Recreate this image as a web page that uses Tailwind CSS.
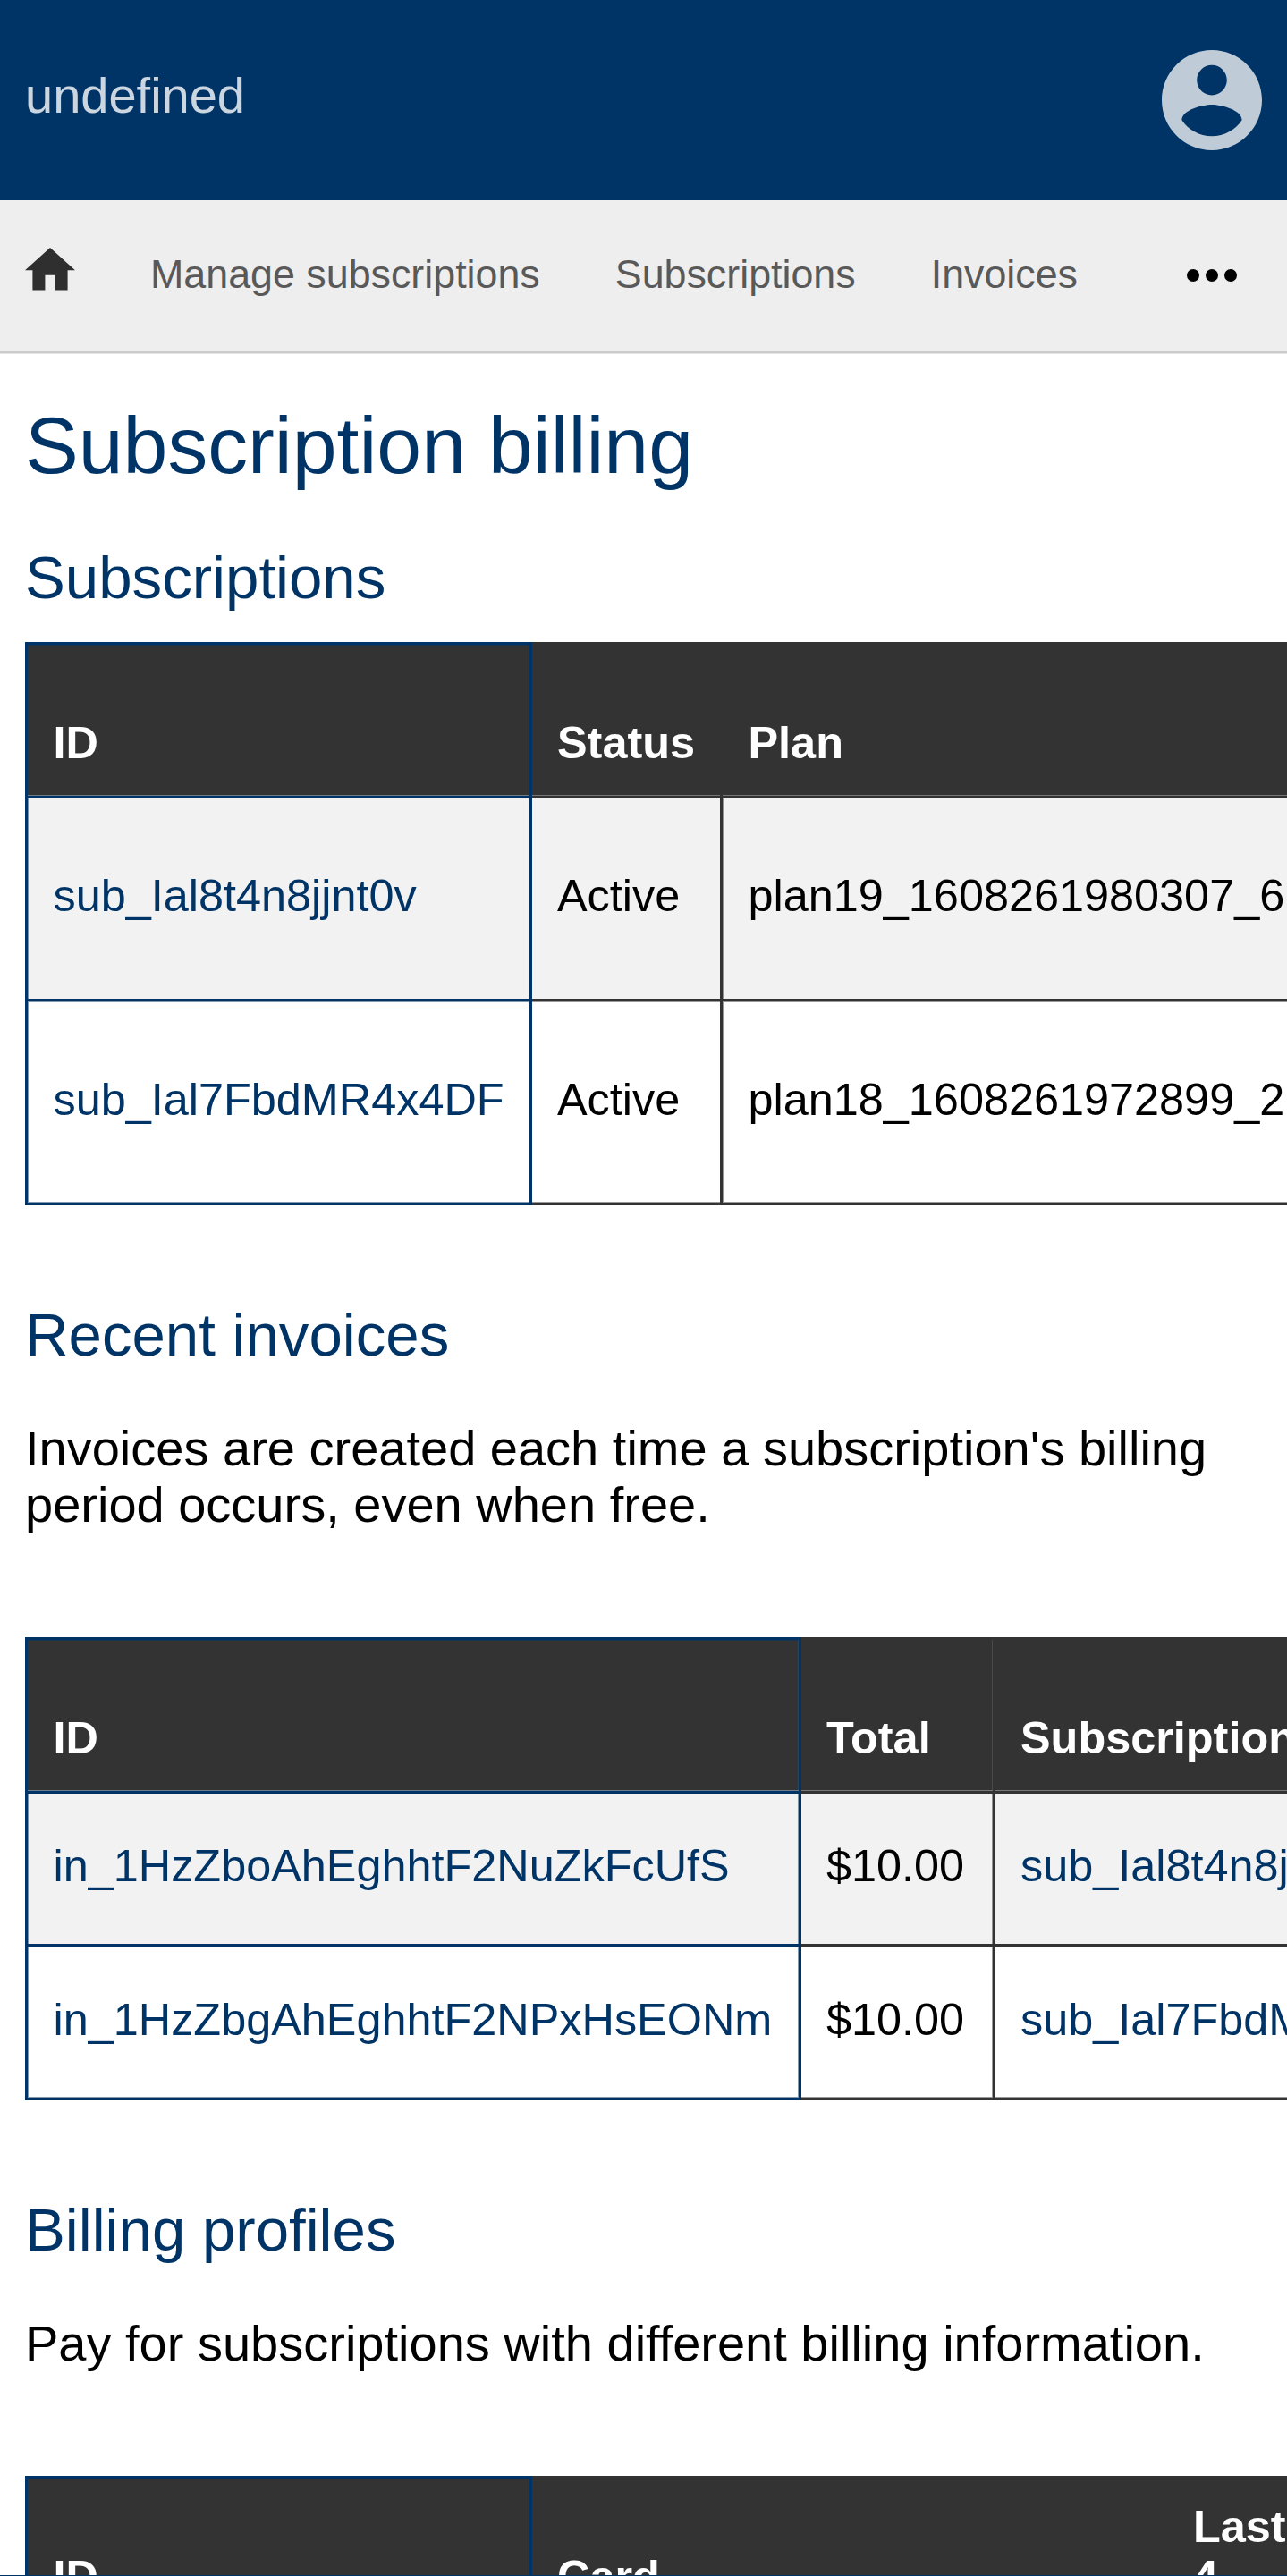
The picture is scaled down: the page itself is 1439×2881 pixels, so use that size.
<!DOCTYPE html>
<html lang="en">
<head>
<meta charset="utf-8">
<title>Subscription billing</title>
<script src="https://cdn.jsdelivr.net/npm/@tailwindcss/browser@4"></script>
</head>
<body class="bg-white overflow-hidden">
<div class="w-[1439px] h-[2881px] overflow-hidden flex flex-col text-black font-['Liberation_Sans',Arial,sans-serif]">
  <header class="h-[224px] shrink-0 bg-[#003466] flex items-center justify-between pl-7 pr-7">
    <a class="text-[56px] leading-[64px] -mt-[11px] text-white/80">undefined</a>
    <svg class="size-[112px]" viewBox="2 2 20 20" fill="#fff" fill-opacity=".75"><path d="M12 2C6.48 2 2 6.48 2 12s4.480 10 10 10 10-4.480 10-10S17.520 2 12 2zm0 3c1.660 0 3 1.340 3 3s-1.340 3-3 3-3-1.340-3-3 1.340-3 3-3zm0 14.200c-2.500 0-4.710-1.280-6-3.220.030-1.990 4-3.080 6-3.080 1.990 0 5.970 1.090 6 3.080-1.290 1.940-3.500 3.220-6 3.220z"/></svg>
  </header>
  <nav class="h-[172px] shrink-0 bg-[#eee] border-b border-[#e3e3e3]">
    <div class="h-[171px] border-b-3 border-[#ccc] flex items-center pl-7 pr-14 text-[44.8px] leading-[52px] text-[#595959]">
      <svg class="w-14 h-[47.6px] -mt-[14px] shrink-0" viewBox="2 3 20 17" fill="#2f2f2f"><path d="M10 20v-6h4v6h5v-8h3L12 3 2 12h3v8z"/></svg>
      <div class="flex gap-[84px] ml-[84px] -mt-[5px] whitespace-nowrap">
        <a>Manage subscriptions</a>
        <a>Subscriptions</a>
        <a>Invoices</a>
      </div>
      <svg class="w-14 h-[14px] ml-auto" viewBox="0 0 16 4" fill="#000"><circle cx="2" cy="2" r="2"/><circle cx="8" cy="2" r="2"/><circle cx="14" cy="2" r="2"/></svg>
    </div>
  </nav>
  <main class="h-[2484px] shrink-0 overflow-hidden pl-7">
    <h1 class="mt-[52px] text-[89.6px] leading-[100px] text-[#003466]">Subscription billing</h1>
    <h2 class="mt-[59px] text-[67.2px] leading-[78px] text-[#003466]">Subscriptions</h2>

    <section class="mt-[33px] text-[50.4px] leading-[56px] whitespace-nowrap">
      <div class="grid grid-cols-[567px_210px_634px] h-[172px] bg-[#333] text-white font-bold">
        <div class="border-3 border-b-0 border-[#003466] shadow-[inset_0_-1px_0_#6f7d8b,inset_-1px_0_0_#274560,inset_0_1px_0_#1a3450] flex items-end pl-[28.5px] pb-[31.5px]">ID</div>
        <div class="shadow-[inset_0_-1px_0_#777] flex items-end pl-[28px] pb-[31.5px]">Status</div>
        <div class="border-l-3 border-[#333] shadow-[inset_0_-1px_0_#777] flex items-end pl-[28.5px] pb-[31.5px]">Plan</div>
      </div>
      <div class="grid grid-cols-[567px_210px_634px] h-[227px] bg-[#f2f2f2]">
        <div class="border-3 border-b-0 border-[#003466] shadow-[inset_1px_0_0_#7a92ab,inset_-1px_0_0_#7a92ab] pl-[28.5px] pt-[80.5px] text-[#003466]">sub_Ial8t4n8jjnt0v</div>
        <div class="border-t-3 border-[#333] pl-[28px] pt-[80.5px]">Active</div>
        <div class="border-t-3 border-l-3 border-[#333] shadow-[inset_1px_0_0_#929292] pl-[28.5px] pt-[80.5px]">plan19_1608261980307_6</div>
      </div>
      <div class="grid grid-cols-[567px_210px_634px] h-[231px] bg-white">
        <div class="border-3 border-[#003466] shadow-[inset_0_0_0_1px_#8099b3] pl-[28.5px] pt-[81.5px] text-[#003466]">sub_Ial7FbdMR4x4DF</div>
        <div class="border-y-3 border-[#333] shadow-[inset_0_1px_0_#999,inset_0_-1px_0_#999] pl-[28px] pt-[81.5px]">Active</div>
        <div class="border-y-3 border-l-3 border-[#333] shadow-[inset_1px_0_0_#999,inset_0_1px_0_#999,inset_0_-1px_0_#999] pl-[28.5px] pt-[81.5px]">plan18_1608261972899_2</div>
      </div>
    </section>

    <h2 class="mt-[106px] text-[67.2px] leading-[78px] text-[#003466]">Recent invoices</h2>
    <p class="mt-14 w-[1383px] text-[56px] leading-[63px]">Invoices are created each time a subscription's billing period occurs, even when free.</p>

    <section class="mt-[117px] text-[50.4px] leading-[56px] whitespace-nowrap">
      <div class="grid grid-cols-[868px_214px_329px] h-[172px] bg-[#333] text-white font-bold">
        <div class="border-3 border-b-0 border-[#003466] shadow-[inset_0_-1px_0_#6f7d8b,inset_-1px_0_0_#274560,inset_0_1px_0_#1a3450] flex items-end pl-[28.5px] pb-[31.5px]">ID</div>
        <div class="border-t-3 border-[#333] shadow-[inset_0_-1px_0_#777,inset_-1px_0_0_#4a4a4a] flex items-end pl-[28px] pb-[31.5px]">Total</div>
        <div class="border-l-3 border-[#333] shadow-[inset_0_-1px_0_#777] flex items-end pl-[28px] pb-[31.5px]">Subscription</div>
      </div>
      <div class="grid grid-cols-[868px_214px_329px] h-[171px] bg-[#f2f2f2]">
        <div class="border-3 border-b-0 border-[#003466] shadow-[inset_1px_0_0_#7a92ab,inset_-1px_0_0_#7a92ab] pl-[28.5px] pt-[52.5px] text-[#003466]">in_1HzZboAhEghhtF2NuZkFcUfS</div>
        <div class="border-t-3 border-[#333] shadow-[inset_-1px_0_0_#929292] pl-[28px] pt-[52.5px]">$10.00</div>
        <div class="border-t-3 border-l-3 border-[#333] pl-[28px] pt-[52.5px]"><span class="text-[#003466]">sub_Ial8t4n8jjnt0v</span></div>
      </div>
      <div class="grid grid-cols-[868px_214px_329px] h-[175px] bg-white">
        <div class="border-3 border-[#003466] shadow-[inset_0_0_0_1px_#8099b3] pl-[28.5px] pt-[53.5px] text-[#003466]">in_1HzZbgAhEghhtF2NPxHsEONm</div>
        <div class="border-y-3 border-[#333] shadow-[inset_-1px_0_0_#999,inset_0_1px_0_#999,inset_0_-1px_0_#999] pl-[28px] pt-[53.5px]">$10.00</div>
        <div class="border-y-3 border-l-3 border-[#333] shadow-[inset_0_1px_0_#999,inset_0_-1px_0_#999] pl-[28px] pt-[53.5px]"><span class="text-[#003466]">sub_Ial7FbdMR4x4DF</span></div>
      </div>
    </section>

    <h2 class="mt-[106px] text-[67.2px] leading-[78px] text-[#003466]">Billing profiles</h2>
    <p class="mt-14 text-[56px] leading-[63px]">Pay for subscriptions with different billing information.</p>

    <section class="mt-[117px] text-[50.4px] leading-[56px] whitespace-nowrap">
      <div class="grid grid-cols-[567px_711px_133px] h-[172px] bg-[#333] text-white font-bold">
        <div class="border-3 border-b-0 border-[#003466] shadow-[inset_-1px_0_0_#274560,inset_0_1px_0_#1a3450] flex items-end pl-[28.5px] pb-[31.5px]">ID</div>
        <div class="flex items-end pl-[28px] pb-[31.5px]">Card</div>
        <div class="pl-[28px] pt-[28.5px]">Last<br>4</div>
      </div>
    </section>
  </main>
  <footer class="h-px shrink-0 bg-[#003466]"></footer>
</div>
</body>
</html>
